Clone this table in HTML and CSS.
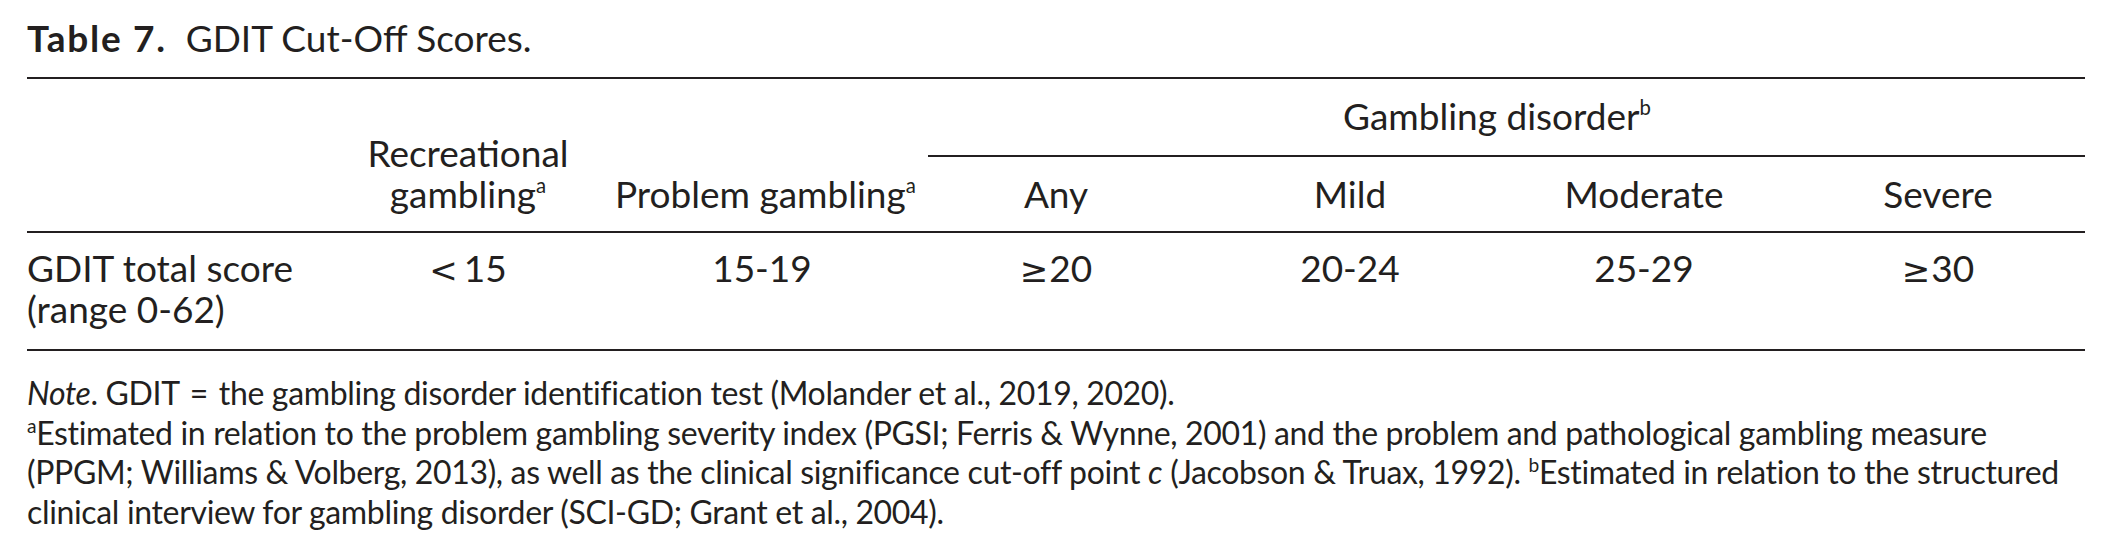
FILE: index.html
```html
<!DOCTYPE html>
<html lang="en">
<head>
<meta charset="utf-8">
<title>Table 7. GDIT Cut-Off Scores.</title>
<link rel="stylesheet" href="styles.css">
</head>
<body>
<div class="page">
  <div class="caption"><span class="caption-label">Table 7.</span>&nbsp; GDIT Cut-Off Scores.</div>
  <div class="table">
    <div class="thead">
      <div class="cell stub-head"></div>
      <div class="cell head-tall col2">Recreational<br>gambling<sup>a</sup></div>
      <div class="cell head-tall col3">Problem gambling<sup>a</sup></div>
      <div class="cell span-head"><div class="span-title">Gambling disorder<sup>b</sup></div></div>
      <div class="cell sub-head">Any</div>
      <div class="cell sub-head">Mild</div>
      <div class="cell sub-head">Moderate</div>
      <div class="cell sub-head">Severe</div>
    </div>
    <div class="tbody">
      <div class="cell stub">GDIT total score<br>(range 0-62)</div>
      <div class="cell val"><span class="op op-lt">&lt;</span>15</div>
      <div class="cell val">15-19</div>
      <div class="cell val"><span class="op">&ge;</span>20</div>
      <div class="cell val">20-24</div>
      <div class="cell val">25-29</div>
      <div class="cell val"><span class="op">&ge;</span>30</div>
    </div>
  </div>
  <div class="notes">
    <div class="note-line"><em>Note</em>. GDIT <span class="eq">=</span> the gambling disorder identification test (Molander et al., 2019, 2020).</div>
    <div class="note-line"><sup>a</sup>Estimated in relation to the problem gambling severity index (PGSI; Ferris &amp; Wynne, 2001) and the problem and pathological gambling measure</div>
    <div class="note-line">(PPGM; Williams &amp; Volberg, 2013), as well as the clinical significance cut-off point <em>c</em> (Jacobson &amp; Truax, 1992). <sup>b</sup>Estimated in relation to the structured</div>
    <div class="note-line">clinical interview for gambling disorder (SCI-GD; Grant et al., 2004).</div>
  </div>
</div>
</body>
</html>
```
FILE: styles.css
```css
html, body {
  margin: 0;
  padding: 0;
  background: #ffffff;
}

body {
  font-family: Lato, "Open Sans", "DejaVu Sans", sans-serif;
  color: #231f20;
}

.page {
  padding: 17px 0 0 27px;
  width: 2058px;
}

.caption {
  font-size: 37px;
  line-height: 41px;
  white-space: nowrap;
}

.caption-label {
  font-weight: 700;
  letter-spacing: 1.7px;
}

.table {
  margin-top: 19px;
  border-top: 2px solid #231f20;
  border-bottom: 2px solid #231f20;
  font-size: 37px;
  line-height: 41px;
}

.thead,
.tbody {
  display: grid;
  grid-template-columns: repeat(7, 294px);
}

.thead {
  grid-template-rows: auto auto;
  border-bottom: 2px solid #231f20;
}

.cell {
  white-space: nowrap;
}

.stub-head {
  grid-column: 1;
  grid-row: 1 / 3;
}

.head-tall {
  grid-row: 1 / 3;
  align-self: end;
  text-align: center;
  padding-bottom: 17px;
}

.col2 { grid-column: 2; }
.col3 { grid-column: 3; }

.span-head {
  grid-column: 4 / 8;
  grid-row: 1;
  padding-top: 16px;
}

.span-title {
  text-align: center;
  padding-bottom: 19px;
  padding-right: 19px;
  margin-left: 19px;
  border-bottom: 2px solid #231f20;
}

.sub-head {
  grid-row: 2;
  text-align: center;
  padding-top: 16px;
  padding-bottom: 17px;
}

.tbody .cell {
  padding-top: 14px;
  padding-bottom: 20px;
}

.stub {
  text-align: left;
}

.val {
  text-align: center;
}

.op {
  font-family: "DejaVu Sans", sans-serif;
  font-size: 0.92em;
  line-height: 0;
  padding-right: 1px;
}

.op-lt {
  padding-right: 6px;
}

sup {
  font-size: 0.55em;
  line-height: 0;
  vertical-align: 0;
  position: relative;
  top: -0.72em;
}

.notes {
  margin-top: 22px;
  font-size: 32px;
  letter-spacing: -0.34px;
  line-height: 39.5px;
}

.note-line {
  white-space: nowrap;
}

.notes sup {
  font-size: 0.6em;
  top: -0.62em;
}

.eq {
  padding: 0 3px;
}
```
